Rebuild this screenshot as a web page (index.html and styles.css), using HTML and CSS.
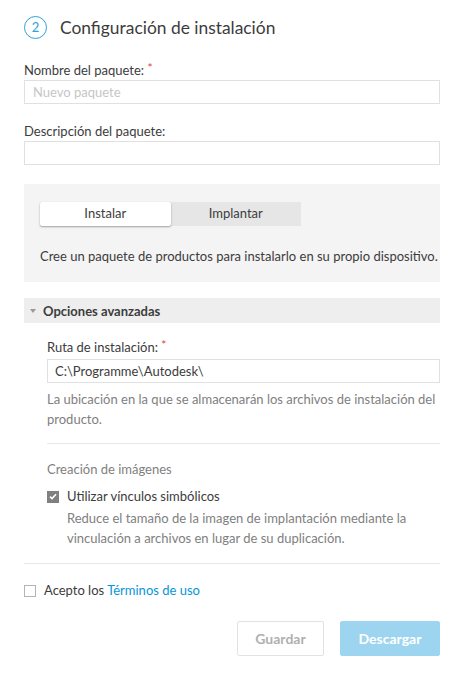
FILE: index.html
```html
<!DOCTYPE html>
<html lang="es">
<head>
<meta charset="utf-8">
<link rel="stylesheet" href="styles.css">
</head>
<body>
<div class="page">
  <div class="step-header">
    <span class="step-num">2</span>
    <h1 class="step-title">Configuración de instalación</h1>
  </div>

  <div class="field">
    <label class="label">Nombre del paquete: <span class="req">*</span></label>
    <div class="input placeholder">Nuevo paquete</div>
  </div>

  <div class="field">
    <label class="label">Descripción del paquete:</label>
    <div class="input"></div>
  </div>

  <div class="panel">
    <div class="tabs">
      <div class="tab active">Instalar</div>
      <div class="tab">Implantar</div>
    </div>
    <p class="panel-text">Cree un paquete de productos para instalarlo en su propio dispositivo.</p>
  </div>

  <div class="adv-bar">
    <span class="caret"></span>
    <span class="adv-title">Opciones avanzadas</span>
  </div>

  <div class="adv-body">
    <label class="label">Ruta de instalación: <span class="req">*</span></label>
    <div class="input value">C:\Programme\Autodesk\</div>
    <p class="help">La ubicación en la que se almacenarán los archivos de instalación del producto.</p>
    <div class="divider"></div>
    <div class="section-title">Creación de imágenes</div>
    <div class="check-row">
      <span class="checkbox checked">
        <svg width="8" height="7" viewBox="0 0 8 7"><path d="M1 3.6 L3 5.5 L7 1.2" fill="none" stroke="#fff" stroke-width="1.6"/></svg>
      </span>
      <div class="check-text">
        <div class="check-label">Utilizar vínculos simbólicos</div>
        <div class="check-help">Reduce el tamaño de la imagen de implantación mediante la vinculación a archivos en lugar de su duplicación.</div>
      </div>
    </div>
  </div>

  <div class="divider full"></div>

  <div class="terms">
    <span class="checkbox"></span>
    <span class="terms-text">Acepto los <a class="link">Términos de uso</a></span>
  </div>

  <div class="actions">
    <button class="btn btn-secondary">Guardar</button>
    <button class="btn btn-primary">Descargar</button>
  </div>
</div>
</body>
</html>
```

FILE: styles.css
```css
* { box-sizing: border-box; }
body {
  margin: 0;
  background: #fff;
  font-family: "Lato", "Noto Sans", sans-serif;
  color: #3c3c3c;
  font-size: 13px;
}
.page {
  width: 464px;
  padding: 16px 24px 0 24px;
}
.step-header {
  display: flex;
  align-items: center;
  height: 22px;
  margin-bottom: 22px;
}
.step-num {
  width: 23px;
  height: 23px;
  border: 1.5px solid #2ba2d9;
  border-radius: 50%;
  color: #2ba2d9;
  font-size: 13px;
  display: flex;
  align-items: center;
  justify-content: center;
  margin-right: 13px;
}
.step-title {
  margin: 0;
  font-size: 17.4px;
  font-weight: 400;
  color: #3c3c3c;
}
.field { margin-bottom: 19px; }
.label {
  display: block;
  font-size: 13px;
  line-height: 16px;
  margin-bottom: 2px;
  color: #3c3c3c;
}
.req { color: #e2412d; vertical-align: 3px; font-size: 12px; }
.input {
  height: 24px;
  border: 1px solid #e0e0e0;
  background: #fff;
  padding: 0 8px;
  line-height: 22px;
  font-size: 13px;
}
.input.placeholder { color: #c6c6c6; }
.input.value { color: #3c3c3c; padding-left: 7px; }
.panel {
  background: #f4f4f4;
  padding: 18px 16px 16px 16px;
  height: 98px;
}
.tabs {
  display: flex;
  width: 261px;
  height: 24px;
  background: #e6e6e6;
}
.tab {
  flex: 1;
  text-align: center;
  line-height: 22px;
  font-size: 13px;
  color: #3c3c3c;
}
.tab.active {
  background: #fff;
  border-radius: 2px;
  box-shadow: 0 1px 2px rgba(0,0,0,0.35);
}
.panel-text {
  margin: 22px 0 0 0;
  font-size: 13px;
  line-height: 17px;
  white-space: nowrap;
}
.adv-bar {
  margin-top: 16px;
  height: 25px;
  background: #eeeeee;
  display: flex;
  align-items: center;
  padding-left: 6px;
}
.caret {
  width: 0;
  height: 0;
  border-left: 3.5px solid transparent;
  border-right: 3.5px solid transparent;
  border-top: 4px solid #9a9a9a;
  margin-right: 7px;
}
.adv-title {
  font-weight: 700;
  font-size: 13px;
  color: #3c3c3c;
}
.adv-body {
  padding: 14px 0 0 23px;
}
.adv-body .label { margin-bottom: 4px; }
.help {
  margin: 6px 0 0 0;
  color: #808080;
  font-size: 13px;
  line-height: 20px;
}
.divider {
  height: 1px;
  background: #e8e8e8;
  margin-top: 14px;
}
.divider.full { margin-top: 15px; }
.section-title {
  margin-top: 17px;
  color: #808080;
  font-size: 13px;
  line-height: 17px;
}
.check-row {
  display: flex;
  align-items: flex-start;
  margin-top: 10px;
}
.checkbox {
  flex: none;
  width: 12px;
  height: 12px;
  border: 1px solid #b4b4b4;
  background: #fff;
  display: flex;
  align-items: center;
  justify-content: center;
  margin-top: 2.5px;
}
.checkbox.checked {
  background: #808080;
  border-color: #808080;
}
.check-text { margin-left: 8px; }
.check-label { font-size: 13px; line-height: 17px; color: #3c3c3c; }
.check-help {
  margin-top: 3px;
  color: #808080;
  font-size: 13px;
  line-height: 20px;
}
.terms {
  display: flex;
  align-items: center;
  height: 17px;
  margin-top: 18px;
}
.terms .checkbox { margin-top: 0; }
.terms-text { margin-left: 8px; font-size: 13px; line-height: 17px; color: #3c3c3c; }
.link { color: #0696d7; text-decoration: none; }
.actions {
  display: flex;
  justify-content: flex-end;
  gap: 16px;
  margin-top: 22px;
}
.btn {
  height: 35px;
  font-family: inherit;
  font-size: 14px;
  font-weight: 700;
  border-radius: 2px;
  cursor: pointer;
}
.btn-secondary {
  width: 87px;
  background: #fff;
  border: 1px solid #e2e2e2;
  color: #b0b0b0;
}
.btn-primary {
  width: 100px;
  background: #9dd5f0;
  border: 1px solid #9dd5f0;
  color: #fff;
}
```
